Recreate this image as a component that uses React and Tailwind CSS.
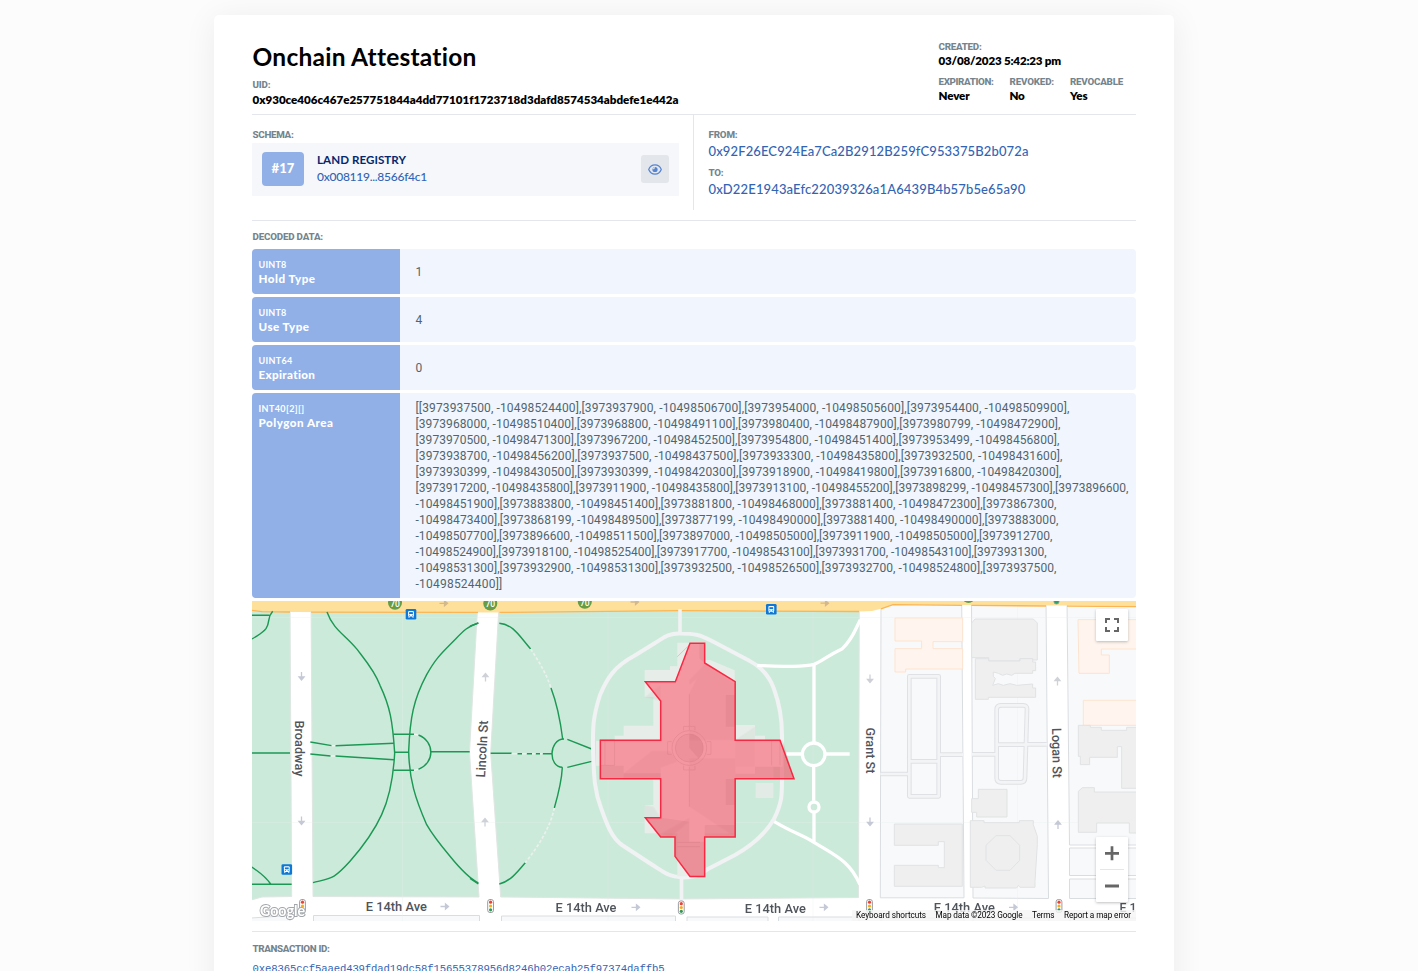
import { useLayoutEffect, useRef, useState } from "react";

/* Single line of text whose tracking is computed so that it fills `w` pixels. */
function Fit({ w, className = "", children }) {
  const ref = useRef(null);
  const [gap, setGap] = useState(0);
  useLayoutEffect(() => {
    const natural = ref.current.getBoundingClientRect().width;
    setGap((w - natural) / String(children).length);
  }, [w, children]);
  return (
    <div className={"flex items-center whitespace-pre " + className}>
      <span ref={ref} style={{ letterSpacing: gap + "px" }}>{children}</span>
    </div>
  );
}

const Label = ({ w, children, className = "" }) => (
  <Fit w={w} className={"h-[14px] font-['Roboto',sans-serif] text-[9.800px] font-extrabold text-[#73848d] " + className}>
    {children}
  </Fit>
);

const Value = ({ w, children }) => (
  <Fit w={w} className="h-[15px] pb-px text-[11.600px] font-extrabold text-black">{children}</Fit>
);

const polygon = [
  ["[[3973937500, -10498524400],[3973937900, -10498506700],[3973954000, -10498505600],[3973954400, -10498509900],", 654],
  ["[3973968000, -10498510400],[3973968800, -10498491100],[3973980400, -10498487900],[3973980799, -10498472900],", 645],
  ["[3973970500, -10498471300],[3973967200, -10498452500],[3973954800, -10498451400],[3973953499, -10498456800],", 644],
  ["[3973938700, -10498456200],[3973937500, -10498437500],[3973933300, -10498435800],[3973932500, -10498431600],", 647],
  ["[3973930399, -10498430500],[3973930399, -10498420300],[3973918900, -10498419800],[3973916800, -10498420300],", 646],
  ["[3973917200, -10498435800],[3973911900, -10498435800],[3973913100, -10498455200],[3973898299, -10498457300],[3973896600,", 713],
  ["-10498451900],[3973883800, -10498451400],[3973881800, -10498468000],[3973881400, -10498472300],[3973867300,", 641],
  ["-10498473400],[3973868199, -10498489500],[3973877199, -10498490000],[3973881400, -10498490000],[3973883000,", 643],
  ["-10498507700],[3973896600, -10498511500],[3973897000, -10498505000],[3973911900, -10498505000],[3973912700,", 637],
  ["-10498524900],[3973918100, -10498525400],[3973917700, -10498543100],[3973931700, -10498543100],[3973931300,", 631],
  ["-10498531300],[3973932900, -10498531300],[3973932500, -10498526500],[3973932700, -10498524800],[3973937500,", 641],
  ["-10498524400]]", 87],
];

const rows = [
  { type: "UINT8", tw: 28, name: "Hold Type", nw: 57, lines: [["1", 5]] },
  { type: "UINT8", tw: 28, name: "Use Type", nw: 51, lines: [["4", 7]] },
  { type: "UINT64", tw: 34, name: "Expiration", nw: 57, lines: [["0", 7]] },
  { type: "INT40[2][]", tw: 46, name: "Polygon Area", nw: 75, lines: polygon },
];

function DataRow({ type, tw, name, nw, lines }) {
  return (
    <div className="flex overflow-hidden rounded-[4px] bg-[#f1f5fd]">
      <div className="w-[148px] bg-[#90b0e7] pt-[8.500px] pl-[6.500px] text-white">
        <Fit w={tw} className="h-[14px] text-[9px] font-bold">{type}</Fit>
        <Fit w={nw} className="h-[14px] text-[11.600px] font-black">{name}</Fit>
      </div>
      <div className={"pl-[15.500px] font-['Roboto',sans-serif] text-[12px] text-[#52656e] " + (lines.length > 1 ? "pt-[7px] pb-[6px]" : "pt-[15px] pb-[14px]")}>
        {lines.map(([t, w]) => <Fit key={t} w={w} className="h-4">{t}</Fit>)}
      </div>
    </div>
  );
}

const Arrow = ({ x, y, r = 0, c = "#c5c9d6" }) => (
  <path d="M-4.500 0H2M0.500-2.500 3.500 0 0.500 2.500Z" transform={`translate(${x} ${y}) rotate(${r})`} fill={c} stroke={c} strokeWidth="1.300" />
);

const Bus = ({ x, y }) => (
  <g transform={`translate(${x} ${y})`}>
    <rect x="-5.300" y="-5.300" width="10.600" height="10.600" rx="1.300" fill="#0d78d8" />
    <rect x="-2.900" y="-3.200" width="5.800" height="5.600" rx="1" fill="#fff" />
    <rect x="-1.900" y="-2.100" width="3.800" height="1.900" fill="#0d78d8" />
    <path d="M-1.900 1h1M.9 1h1" stroke="#0d78d8" strokeWidth=".9" />
    <path d="M-2 2v1.600M2 2v1.600" stroke="#fff" strokeWidth="1" />
  </g>
);

const Light = ({ x, y }) => (
  <g transform={`translate(${x} ${y})`}>
    <rect x="-2.900" y="-6.500" width="5.800" height="13" rx="2.300" fill="#fff" stroke="#8d9296" strokeWidth=".9" />
    <circle cy="-3.800" r="1.600" fill="#ea4335" />
    <circle r="1.600" fill="#fbab18" />
    <circle cy="3.800" r="1.600" fill="#2f9a55" />
  </g>
);

const Shield = ({ x, y }) => (
  <g>
    <circle cx={x} cy={y} r="7" fill="#669c44" />
    <text x={x} y={y + 3.8} textAnchor="middle" fontFamily="Roboto" fontSize="8.500" fontWeight="500" fill="#fff">70</text>
  </g>
);

const Street = ({ x, y, r = 0, len, children }) => (
  <text transform={`translate(${x} ${y}) rotate(${r})`} y="4.600" textAnchor="middle" textLength={len} lengthAdjust="spacingAndGlyphs"
    fontFamily="Roboto" fontSize="13" fontWeight="500" fill="#50555c" stroke="#fff" strokeWidth="2.500" paintOrder="stroke">{children}</text>
);

function Capitol() {
  return (
    <g transform="translate(590 625) scale(.333333)">
      <g fill="#e7eee9">
        <path d="M262 53H344V105H360L434 136V300H495V332H525V345H578V425H550V462H436V540H434V625H344V754H262V625H164V540H190V462H30V422H18V348H74V332H101V302H190V216H164V135H240V124H262Z" />
        <rect x="497" y="474" width="53" height="45" fill="#e3ebe7" />
      </g>
      <g fill="#80908a" opacity=".14">
        <path d="M298 205V345H436V178L344 115Z" />
        <path d="M298 400V545L436 636V400Z" />
        <path d="M101 445 185 378H240L262 410 212 428V462H101Z" />
        <path d="M436 345 495 305V425H436Z" opacity=".6" />
        <path d="M164 216 212 180V228ZM190 216 212 190V216ZM164 540 190 545 212 578H164Z" opacity=".7" />
        <path d="M215 625 298 578V590L240 636ZM298 165 344 118V140L298 180Z" />
      </g>
      <g fill="#6f8277" opacity=".2">
        <path d="M407 210H436V305H407ZM407 462H436V540H407Z" />
        <path d="M30 422H101V445H212V462H30ZM495 425H578V345L612 462H436V446H495Z" />
        <path d="M164 578H212L298 590V650H344V754H300L256 693V636H212ZM344 600H436V636H344Z" />
        <path d="M328 55H344V115L328 100Z" />
      </g>
      <g fill="none" stroke="#8fa096" strokeWidth="3" opacity=".4">
        <circle cx="298" cy="369" r="52" /><circle cx="298" cy="369" r="42" />
        <path d="M245 350H233V388H245M350 350H363V388H350M281 316V304H315V316M281 422V435H315V422M30 345H74V421H30M45 345V421M545 345V421M570 345V421M298 208V315M298 425V545M262 95 298 60M262 652H330M262 665H330" />
      </g>
      <circle cx="298" cy="369" r="41" fill="#6f8277" opacity=".14" />
      <path d="M298 369 298 328A41 41 0 0 1 325 400Z" fill="#6f7a74" opacity=".22" />
      <path d="M300 54.500 256 170H166L212 228V345.500H31V461.500H212V578.500H166L212 636H255V694L300 754.500H344V636H435.500V461.500H612L570 345.500H435.500V170L344 114V54.500Z" fill="#ff5e72" fillOpacity=".6" stroke="#fb2742" strokeWidth="4.500" />
    </g>
  );
}

function MapDrawing() {
  return (
    <svg className="block h-[320px] w-[884px]" viewBox="252 601 884 320">
      <rect x="252" y="601" width="884" height="320" fill="#fff" />
      {/* park */}
      <g fill="#cceada" stroke="#dfe6e3" strokeWidth="1">
        <path d="M251 600H290L291.700 896.500 262 897 251 900Z" />
        <path d="M311 600H478L469.500 752 479 897 313 896.500Z" />
        <path d="M499.300 600H859.300L858.500 897.500 681 899 500.700 897 490.700 753Z" />
      </g>
      {/* city blocks */}
      <g fill="#f8f9fb" stroke="#dadde0" strokeWidth="1">
        <path d="M881 600H961.700L964 897.800H880.300Z" />
        <path d="M971.500 600H1046L1048.500 898.500 973 898Z" />
        <path d="M1067 600H1140V845H1069.500Z" />
        <path d="M1069.500 848H1140V875.500H1069.500ZM1069.500 879H1140V898.500H1069.500Z" />
        <path d="M251 918 290 915.500V925H251ZM313.500 915.500H479.500V925H313.500ZM501.500 916H675.500V925H501.500ZM687 917H768V925H687ZM778.500 917H859V925H778.500ZM881 918H964V925H881ZM973 918H1049V925H973ZM1070 918H1140V925H1070Z" />
      </g>
      <g fill="none" stroke="#e6efea" strokeWidth=".6" opacity=".5">
        <path d="M402.500 612V921M608 612V921M813 612V921M1017.500 606V921M252 617.500H1136M252 822.500H1136" />
      </g>
      {/* highway */}
      <path d="M251 600H1137V606L893 604.700 882 608.500 872 611 859 611.500 680 610.700 500 612.400 290 612 262 611.500 251 610Z" fill="#ffe09b" />
      <path d="M251 610.200 262 611.600 290 612M311 612.200 478 612.300M499.500 612.400 680 610.700 859 611.500M881 608.800 893 604.700 962 605.300M971.500 605.400 1046 606M1067 606.200 1137 606.600" fill="none" stroke="#fbb552" strokeWidth="1.300" />

      {/* west lawn paths */}
      <g transform="translate(250 598) scale(.333333)" fill="none" stroke="#1b9854" strokeWidth="4.300">
        <path d="M6 52H58M68 40C50 60 62 70 48 92 38 106 22 112 6 123M6 465H120M6 859H125M6 807C25 822 42 830 62 858" />
        <path d="M231 42C250 95 285 110 322 155 345 185 375 220 390 262 420 325 428 370 434 465 430 540 418 600 395 650 370 705 335 750 300 790 250 845 245 840 189 854" />
        <path d="M685 75C650 85 635 105 605 135 570 170 555 185 530 230 490 305 480 360 476 460 478 545 495 600 530 680 550 715 575 745 600 775 630 812 655 840 685 855" />
        <path d="M181 432 245 443M256 443 432 436M181 468 242 474M256 474 432 485M434 463H476M430 409H492M430 517H492M542 461H659" />
        <path d="M505 411C555 430 555 495 505 514" />
        <path d="M245 443H256M242 474H256M492 409 505 411M492 517 505 514" stroke="#eef4f0" />
      </g>
      <g transform="translate(470 598) scale(.333333)" fill="none" stroke="#1b9854" strokeWidth="4.300">
        <path d="M0 85 25 75M88 76C130 80 145 110 182 153M243 270C262 320 270 360 278 423M277 508C275 550 266 585 253 630M166 794C140 825 120 850 88 858M0 841 25 858" />
        <path d="M62 466H125M142 467H156M170 467H186M197 467H210M218 467H246" />
        <path d="M125 467H142M156 467H170M186 467H197M210 467H218" stroke="#eaf1ed" />
        <path d="M282 423C235 424 235 508 277 508M292 424 365 453M292 508 365 490" />
        <path d="M182 153C210 195 230 230 243 270M253 630C240 690 205 745 166 794" stroke="#eaf1ed" strokeWidth="5" strokeDasharray="9 6" />
      </g>
      {/* capitol drive and east paths */}
      <g fill="none" stroke="#f0f2f3" strokeWidth="4">
        <path d="M680 633.500C668 633 662 639 655 643L634 656C615 666 607 678 600 695 592 720 593 730 593 750 594 775 594 790 601 808 607 825 612 838 622 845L651 864C667 874 668 876 682 877.500 695 878 700 874 708 869L735 855C755 844 767 831 774 819 782 803 782 795 782 780V735C782 713 778 700 774 689 769 675 760 666 748 660L712 641C700 635 696 633.500 680 633.500Z" />
        <path d="M680 609V633M681.500 878V902" strokeWidth="3.600" />
      </g>
      <g transform="translate(680 598) scale(.333333)" fill="none" stroke="#fff" strokeWidth="10">
        <path d="M232 202C310 208 380 205 402 199 430 188 440 174 487 152 520 120 525 95 541 65" />
        <path d="M402 199V432M401 506V608M402 645V731M318 468H365M437 468H509" />
        <path d="M283 671C340 705 370 712 402 733 470 775 510 790 540 860" />
        <circle cx="401" cy="469" r="34" />
        <circle cx="402" cy="627" r="15" />
      </g>

      <Capitol />

      {/* east blocks */}
      <g transform="translate(850 598) scale(.333333)" strokeWidth="3">
        <g fill="#fff5ee" stroke="#fde3cf">
          <path d="M135 60H338V131H249V152H338V213H167V222H135V152H215V129H135Z" />
          <path d="M684 65H860V153H754V171H778V226H687ZM700 307H860V382H700Z" />
        </g>
        <g fill="#efefef" stroke="#e0e2e3">
          <path d="M365 75 375 63H550L562 75V186H548V182H510V189H416V179H365Z" />
          <path d="M376 182H416V189H510V182H548V192H557V218H548V226H495L485 232 470 228 458 232 445 226 430 222V235L436 242 428 262 445 257 460 262 480 257 500 262 548 258V270H557V298H415V304H376Z" />
          <path d="M385 574H471V657H380V643H365V602H385Z" />
          <path d="M361 668H402V674H508V668H550V680L562 715V740L555 850V868H510L505 862 500 870H405V864L395 868H361Z" />
          <path d="M408 742 438 713H480L509 742V787L480 817H438L408 787Z" />
          <path d="M133 678H337V865H133V802H265V809H283V731H265V742H133Z" />
          <path d="M685 382H721V388H754V397H830V388H860V571H815V446H802V478H719V500H691V475H685Z" />
          <path d="M685 580 697 569H733V582H860V705H838V675H740V703H685Z" />
        </g>
        <g fill="none" stroke="#dfe1e4" strokeWidth="14" strokeLinejoin="round">
          <path d="M178 235H266V595H178ZM178 490H266M266 470H337M93 528H172" />
          <path d="M440 335Q440 322 453 322H520Q532 322 531 335L525 540Q525 553 512 553H453Q440 553 440 540ZM440 440H525M530 439H590M367 469H438" />
        </g>
        <g fill="none" stroke="#f3f4f5" strokeWidth="8" strokeLinejoin="round">
          <path d="M178 235H266V595H178ZM178 490H266M266 470H339M91 528H178" />
          <path d="M440 335Q440 322 453 322H520Q532 322 531 335L525 540Q525 553 512 553H453Q440 553 440 540ZM440 440H525M530 439H592M365 469H440" />
        </g>
      </g>

      <Arrow x={301.5} y={676.5} r={90} />
      <Arrow x={301.5} y={821} r={90} />
      <Arrow x={485.5} y={677} r={-90} c="#cfd1d8" />
      <Arrow x={485} y={822} r={-90} c="#cfd1d8" />
      <Arrow x={870} y={679} r={90} c="#cdd0d8" />
      <Arrow x={870} y={822} r={90} />
      <Arrow x={1057.5} y={681} r={-90} c="#cfd3d8" />
      <Arrow x={1058} y={824.5} r={-90} />
      <Arrow x={445} y={906.5} />
      <Arrow x={636} y={907.3} />
      <Arrow x={824} y={907.3} />
      <Arrow x={1013.5} y={907.3} />
      <Arrow x={444} y={603.3} c="#d3b98a" />
      <Arrow x={635} y={602} c="#d3b98a" />
      <Arrow x={825} y={603.2} c="#d3b98a" />
      <Shield x={395} y={602.8} />
      <Shield x={490.3} y={603.5} />
      <Shield x={584.8} y={601.7} />
      <circle cx="968.500" cy="597" r="6" fill="#669c44" />
      <circle cx="1056.500" cy="601.500" r="2.600" fill="#20a765" stroke="#9ba5a0" strokeWidth=".8" />
      <Bus x={411} y={614.2} />
      <Bus x={771.3} y={609.3} />
      <Bus x={286.8} y={869.5} />

      <Street x={300} y={748.5} r={90} len={56}>Broadway</Street>
      <Street x={482} y={749} r={-87} len={57}>Lincoln St</Street>
      <Street x={870.5} y={750.5} r={90} len={46}>Grant St</Street>
      <Street x={1057} y={753} r={89} len={50}>Logan St</Street>
      <Street x={396.3} y={906} len={61}>E 14th Ave</Street>
      <Street x={586} y={907} len={61}>E 14th Ave</Street>
      <Street x={775.3} y={908.4} len={61}>E 14th Ave</Street>
      <Street x={964.3} y={907.5} len={61}>E 14th Ave</Street>
      <Street x={1128} y={907.5} len={17}>E 1</Street>
      <Light x={302.5} y={906} />
      <Light x={490.6} y={906} />
      <Light x={681.3} y={907.5} />
      <Light x={869.5} y={906} />
      <Light x={1059} y={906} />
      <text x="260" y="916" textLength="45" lengthAdjust="spacingAndGlyphs" fontFamily="Lato" fontSize="16" fontWeight="700" fill="#fff" stroke="#a2a6aa" strokeWidth="2" paintOrder="stroke">Google</text>
    </svg>
  );
}

function MapView() {
  return (
    <div className="relative mt-[3px] h-[320px] overflow-hidden">
      <MapDrawing />
      <button className="absolute top-2 right-2 flex size-8 items-center justify-center rounded-[1px] bg-white shadow-[0_1px_3px_rgba(0,0,0,0.25)]">
        <svg className="size-[14px]" viewBox="0 0 14 14" fill="none" stroke="#666" strokeWidth="2">
          <path d="M1 5V1H5M9 1H13V5M13 9V13H9M5 13H1V9" />
        </svg>
      </button>
      <div className="absolute right-2 bottom-[19px] flex h-[65px] w-8 flex-col items-center rounded-[1px] bg-white shadow-[0_1px_3px_rgba(0,0,0,0.25)]">
        <svg className="h-8 w-[14px]" viewBox="0 0 14 32" stroke="#666" strokeWidth="2.700"><path d="M0 16.300H14M7 9.300V23.300" /></svg>
        <div className="h-px w-6 bg-[#e6e6e6]" />
        <svg className="h-8 w-[14px]" viewBox="0 0 14 32" stroke="#666" strokeWidth="3"><path d="M0 16H14" /></svg>
      </div>
      <div className="absolute right-0 bottom-0 flex h-[11px] gap-[9.500px] bg-[#f5f5f5]/80 pr-[5px] pl-[4px] font-['Roboto',sans-serif] text-[8.200px] text-black">
        <Fit w={70}>Keyboard shortcuts</Fit>
        <Fit w={87}>Map data ©2023 Google</Fit>
        <Fit w={22.5}>Terms</Fit>
        <Fit w={67}>Report a map error</Fit>
      </div>
    </div>
  );
}

export default function App() {
  return (
    <div className="h-[971px] overflow-hidden bg-[#fcfcfc] pt-[15px] pl-[214px] font-['Lato',sans-serif]">
      <main className="h-[1100px] w-[960px] rounded-[5px] bg-white px-[38px] pt-[25px] shadow-[0_4px_33px_rgba(0,0,0,0.07)]">
        <header className="flex h-[75px] justify-between border-b border-[#e3e6ec] pl-[0.500px]">
          <div>
            <Fit w={223.5} className="h-[34px] text-[24.500px] font-bold text-black">Onchain Attestation</Fit>
            <Label w={18} className="mt-1 mb-px">UID:</Label>
            <Value w={426}>0x930ce406c467e257751844a4dd77101f1723718d3dafd8574534abdefe1e442a</Value>
          </div>
          <div className="w-[197.500px]">
            <Label w={43}>CREATED:</Label>
            <Value w={122.5}>03/08/2023 5:42:23 pm</Value>
            <div className="mt-[6px] flex">
              <div className="w-[71px]"><Label w={55}>EXPIRATION:</Label><Value w={31}>Never</Value></div>
              <div className="w-[60.500px]"><Label w={44.5}>REVOKED:</Label><Value w={15}>No</Value></div>
              <div><Label w={53}>REVOCABLE</Label><Value w={17.5}>Yes</Value></div>
            </div>
          </div>
        </header>

        <section className="flex h-[106px] border-b border-[#e3e6ec]">
          <div className="mb-[10px] w-[442px] border-r border-[#e3e6ec] pt-[13px] pr-[14px]">
            <Label w={41} className="pl-[0.500px]">SCHEMA:</Label>
            <div className="mt-px flex h-[53px] items-center bg-[#f5f7fb] px-[10px] pb-px">
              <div className="flex h-[34px] w-[42px] items-center justify-center rounded-[4px] bg-[#90b0e7] text-white">
                <Fit w={23} className="text-[13px] font-black">#17</Fit>
              </div>
              <div className="ml-[13px] grow pb-px">
                <Fit w={89} className="h-[17px] text-[11.600px] font-bold text-[#04286d]">LAND REGISTRY</Fit>
                <Fit w={110} className="h-[17px] text-[12px] font-medium text-[#3364b4]">0x008119...8566f4c1</Fit>
              </div>
              <div className="flex size-7 items-center justify-center rounded-[3px] bg-[#e3e6ea]">
                <svg className="h-[11px] w-[14px]" viewBox="0 0 14 11" fill="none" stroke="#5584d2" strokeWidth="1.200">
                  <path d="M.7 5.500C3.200-.6 10.800-.6 13.300 5.500 10.800 11.600 3.200 11.600.7 5.500Z" />
                  <circle cx="7" cy="5.500" r="2.600" fill="#5584d2" stroke="none" />
                  <path d="M4.600 4.700H6.200V3" strokeWidth="1" stroke="#e3e6ea" />
                </svg>
              </div>
            </div>
          </div>
          <div className="pt-[13px] pl-[14.500px]">
            <Label w={29}>FROM:</Label>
            <Fit w={320} className="mt-px h-[18px] text-[13px] font-medium text-[#3364b4]">0x92F26EC924Ea7Ca2B2912B259fC953375B2b072a</Fit>
            <Label w={15} className="mt-[5px]">TO:</Label>
            <Fit w={317} className="mt-px h-[18px] text-[13px] font-medium text-[#3364b4]">0xD22E1943aEfc22039326a1A6439B4b57b5e65a90</Fit>
          </div>
        </section>

        <section className="border-b border-[#e3e6ec] pt-[9px] pb-[10px]">
          <Label w={70.5} className="pl-[0.500px]">DECODED DATA:</Label>
          <div className="mt-[5px] flex flex-col gap-[3px]">
            {rows.map((r) => <DataRow key={r.name} {...r} />)}
          </div>
          <MapView />
        </section>

        <section className="pt-[10px] pl-[0.500px]">
          <Label w={77}>TRANSACTION ID:</Label>
          <Fit w={412} className="mt-[6px] h-4 font-['Liberation_Mono',monospace] text-[10.600px] text-[#3364b4]">0xe8365ccf5aaed439fdad19dc58f15655378956d8246b02ecab25f97374daffb5</Fit>
        </section>
      </main>
    </div>
  );
}
